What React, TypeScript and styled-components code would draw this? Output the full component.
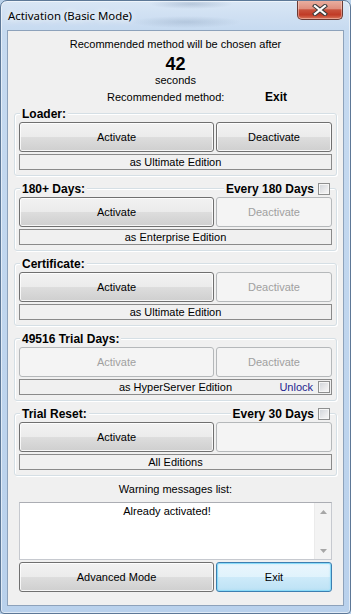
import React from "react";
import styled, { createGlobalStyle, css } from "styled-components";

const GlobalStyle = createGlobalStyle`
  html, body { margin: 0; padding: 0; background: #b9d1ea; }
  body { font-family: "Liberation Sans", Arial, sans-serif; font-size: 11px; color: #000; }
  * { box-sizing: border-box; }
`;

const Window = styled.div`
  width: 351px;
  height: 614px;
  display: flex;
  flex-direction: column;
  border: 1px solid #5d7897;
  border-radius: 7px 7px 4px 4px;
  padding: 0 6px 7px;
  overflow: hidden;
  background:
    radial-gradient(ellipse 42px 5px at 190px 3px, rgba(70, 95, 130, 0.22), transparent),
    radial-gradient(ellipse 55px 6px at 185px 21px, rgba(70, 95, 130, 0.18), transparent),
    linear-gradient(to bottom, #d9e6f5 0px, #c6daf0 30px, #b9d1ec 100%);
  box-shadow: inset 0 0 0 1px rgba(255, 255, 255, 0.55);
`;

const TitleBar = styled.div`
  height: 29px;
  flex: none;
  display: flex;
  align-items: center;
`;

const Title = styled.span`
  font-family: "Noto Sans", "Segoe UI", sans-serif;
  font-size: 11.4px;
  line-height: 16px;
  padding-left: 1px;
  color: #000;
  text-shadow: 0 0 6px #fff, 0 0 10px rgba(255, 255, 255, 0.8);
`;

const CloseButton = styled.div`
  margin-left: auto;
  margin-right: 1px;
  margin-top: -1px;
  align-self: flex-start;
  width: 46px;
  height: 20px;
  display: flex;
  align-items: center;
  justify-content: center;
  border: 1px solid #6b3a34;
  border-top: none;
  border-radius: 0 0 5px 5px;
  background: linear-gradient(
    to bottom,
    #eab2a4 0%,
    #df8f7e 45%,
    #c9523d 52%,
    #c13a26 78%,
    #d9765c 100%
  );
  box-shadow: inset 0 0 0 1px rgba(255, 220, 210, 0.45);
`;

const Client = styled.div`
  flex: 1;
  display: flex;
  flex-direction: column;
  background: #f0f0f0;
  border: 1px solid #8da2bb;
  padding: 7px 6px 0;
`;

const InfoLine = styled.div`
  text-align: center;
  line-height: 13px;
`;

const Countdown = styled.div`
  text-align: center;
  font-size: 18px;
  font-weight: bold;
  line-height: 19px;
  margin-top: 4px;
`;

const MethodRow = styled.div`
  display: flex;
  line-height: 13px;
  margin-top: 4px;
  padding-left: 93px;
`;

const MethodLabel = styled.span`
  width: 158px;
`;

const MethodValue = styled.span`
  font-weight: bold;
  font-size: 12px;
`;

const GroupStack = styled.div`
  display: flex;
  flex-direction: column;
  gap: 12px;
  margin-top: 9px;
`;

const Group = styled.section`
  border: 1px solid #d5dfe5;
  border-radius: 3px;
  box-shadow: inset 1px 1px 0 #fff, 1px 1px 0 #fff;
  padding: 0 4px 5px;
  display: flex;
  flex-direction: column;
`;

const GroupHeader = styled.div`
  height: 14px;
  margin: -7px 0 1px;
  display: flex;
  align-items: center;
  justify-content: space-between;
`;

const GroupTitle = styled.span`
  background: #f0f0f0;
  padding: 0 2px;
  margin-left: 1px;
  font-weight: bold;
  font-size: 12px;
  line-height: 14px;
`;

const HeaderOption = styled.label`
  display: flex;
  align-items: center;
  gap: 4px;
  background: #f0f0f0;
  padding-left: 2px;
  margin-right: 2px;
  font-weight: bold;
  font-size: 12px;
  line-height: 14px;
`;

const CheckBox = styled.span`
  width: 12px;
  height: 12px;
  flex: none;
  border: 1px solid #8e8f8f;
  background: linear-gradient(135deg, #cfd3d8 0%, #eeeeef 70%, #f8f8f8 100%);
  box-shadow: inset 0 0 0 1px #f6f6f6;
`;

const ButtonRow = styled.div`
  display: grid;
  grid-template-columns: 195px 1fr;
  gap: 2px;
`;

const Button = styled.button<{ $disabled?: boolean; $default?: boolean }>`
  height: 30px;
  margin: 0;
  padding: 0;
  font-family: "Liberation Sans", Arial, sans-serif;
  font-size: 11px;
  color: #000;
  border: 1px solid #707070;
  border-radius: 3px;
  background: linear-gradient(to bottom, #f2f2f2 0%, #ebebeb 50%, #dddddd 51%, #cfcfcf 100%);
  box-shadow: inset 0 0 0 1px rgba(255, 255, 255, 0.8);
  ${(p) =>
    p.$disabled &&
    css`
      color: #a0a0a0;
      border-color: #b5b8ba;
      background: #f4f4f4;
      box-shadow: none;
    `}
  ${(p) =>
    p.$default &&
    css`
      border-color: #3c7fb1;
      background: linear-gradient(to bottom, #eaf6fd 0%, #e0f3fc 50%, #cdeaf9 51%, #bde2f5 100%);
      box-shadow: inset 0 0 0 1px #8adbf8, inset 0 0 2px 1px rgba(150, 220, 250, 0.5);
    `}
`;

const EditionLabel = styled.div`
  margin-top: 2px;
  height: 16px;
  border: 1px solid #8a8a8a;
  display: grid;
  grid-template-columns: 1fr auto 1fr;
  align-items: center;
  line-height: 14px;
`;

const EditionText = styled.span`
  grid-column: 2;
  text-align: center;
`;

const UnlockOption = styled.label`
  grid-column: 3;
  justify-self: end;
  display: flex;
  align-items: center;
  gap: 5px;
  margin-right: 1px;
  color: #1f1f8f;
`;

const MessagesSection = styled.div`
  display: flex;
  flex-direction: column;
  padding: 0 5px;
`;

const WarningTitle = styled.div`
  margin-top: 7px;
  text-align: center;
  line-height: 13px;
`;

const ListBox = styled.div`
  margin-top: 6px;
  height: 58px;
  display: flex;
  background: #fff;
  border: 1px solid #c6c9cf;
  border-top-color: #abadb3;
`;

const ListText = styled.div`
  flex: 1;
  text-align: center;
  padding-top: 2px;
  line-height: 13px;
`;

const ScrollBar = styled.div`
  width: 17px;
  display: flex;
  flex-direction: column;
  justify-content: space-between;
  background: #f3f3f3;
  border-left: 1px solid #ebebeb;
`;

const ScrollArrow = styled.div`
  height: 17px;
  display: flex;
  align-items: center;
  justify-content: center;
`;

const FooterRow = styled(ButtonRow)`
  margin-top: 2px;
`;

const Check = () => <CheckBox />;

const Arrow = ({ up }: { up?: boolean }) => (
  <ScrollArrow>
    <svg width="7" height="4" viewBox="0 0 7 4">
      <polygon points={up ? "0,4 3.5,0 7,4" : "0,0 7,0 3.5,4"} fill="#a6a6a6" />
    </svg>
  </ScrollArrow>
);

type GroupProps = {
  title: string;
  option?: string;
  activate: boolean;
  deactivate: boolean;
  deactivateLabel?: string;
  edition: string;
  unlock?: boolean;
};

const ActivationGroup = ({
  title,
  option,
  activate,
  deactivate,
  deactivateLabel = "Deactivate",
  edition,
  unlock,
}: GroupProps) => (
  <Group>
    <GroupHeader>
      <GroupTitle>{title}</GroupTitle>
      {option && (
        <HeaderOption>
          {option}
          <Check />
        </HeaderOption>
      )}
    </GroupHeader>
    <ButtonRow>
      <Button $disabled={!activate}>Activate</Button>
      <Button $disabled={!deactivate}>{deactivateLabel}</Button>
    </ButtonRow>
    <EditionLabel>
      <EditionText>{edition}</EditionText>
      {unlock && (
        <UnlockOption>
          Unlock
          <Check />
        </UnlockOption>
      )}
    </EditionLabel>
  </Group>
);

export default function App() {
  return (
    <>
      <GlobalStyle />
      <Window>
        <TitleBar>
          <Title>Activation (Basic Mode)</Title>
          <CloseButton>
            <svg width="16" height="12" viewBox="0 0 16 12">
              <path d="M3 2 L13 10 M13 2 L3 10" stroke="#3b3b3b" strokeWidth="4.2" strokeLinecap="square" />
              <path d="M3 2 L13 10 M13 2 L3 10" stroke="#ffffff" strokeWidth="2.2" strokeLinecap="square" />
            </svg>
          </CloseButton>
        </TitleBar>
        <Client>
          <InfoLine>Recommended method will be chosen after</InfoLine>
          <Countdown>42</Countdown>
          <InfoLine>seconds</InfoLine>
          <MethodRow>
            <MethodLabel>Recommended method:</MethodLabel>
            <MethodValue>Exit</MethodValue>
          </MethodRow>

          <GroupStack>
            <ActivationGroup title="Loader:" activate deactivate edition="as Ultimate Edition" />
            <ActivationGroup
              title="180+ Days:"
              option="Every 180 Days"
              activate
              deactivate={false}
              edition="as Enterprise Edition"
            />
            <ActivationGroup title="Certificate:" activate deactivate={false} edition="as Ultimate Edition" />
            <ActivationGroup
              title="49516 Trial Days:"
              activate={false}
              deactivate={false}
              edition="as HyperServer Edition"
              unlock
            />
            <ActivationGroup
              title="Trial Reset:"
              option="Every 30 Days"
              activate
              deactivate={false}
              deactivateLabel=""
              edition="All Editions"
            />
          </GroupStack>

          <MessagesSection>
            <WarningTitle>Warning messages list:</WarningTitle>
            <ListBox>
              <ListText>Already activated!</ListText>
              <ScrollBar>
                <Arrow up />
                <Arrow />
              </ScrollBar>
            </ListBox>
            <FooterRow>
              <Button>Advanced Mode</Button>
              <Button $default>Exit</Button>
            </FooterRow>
          </MessagesSection>
        </Client>
      </Window>
    </>
  );
}
